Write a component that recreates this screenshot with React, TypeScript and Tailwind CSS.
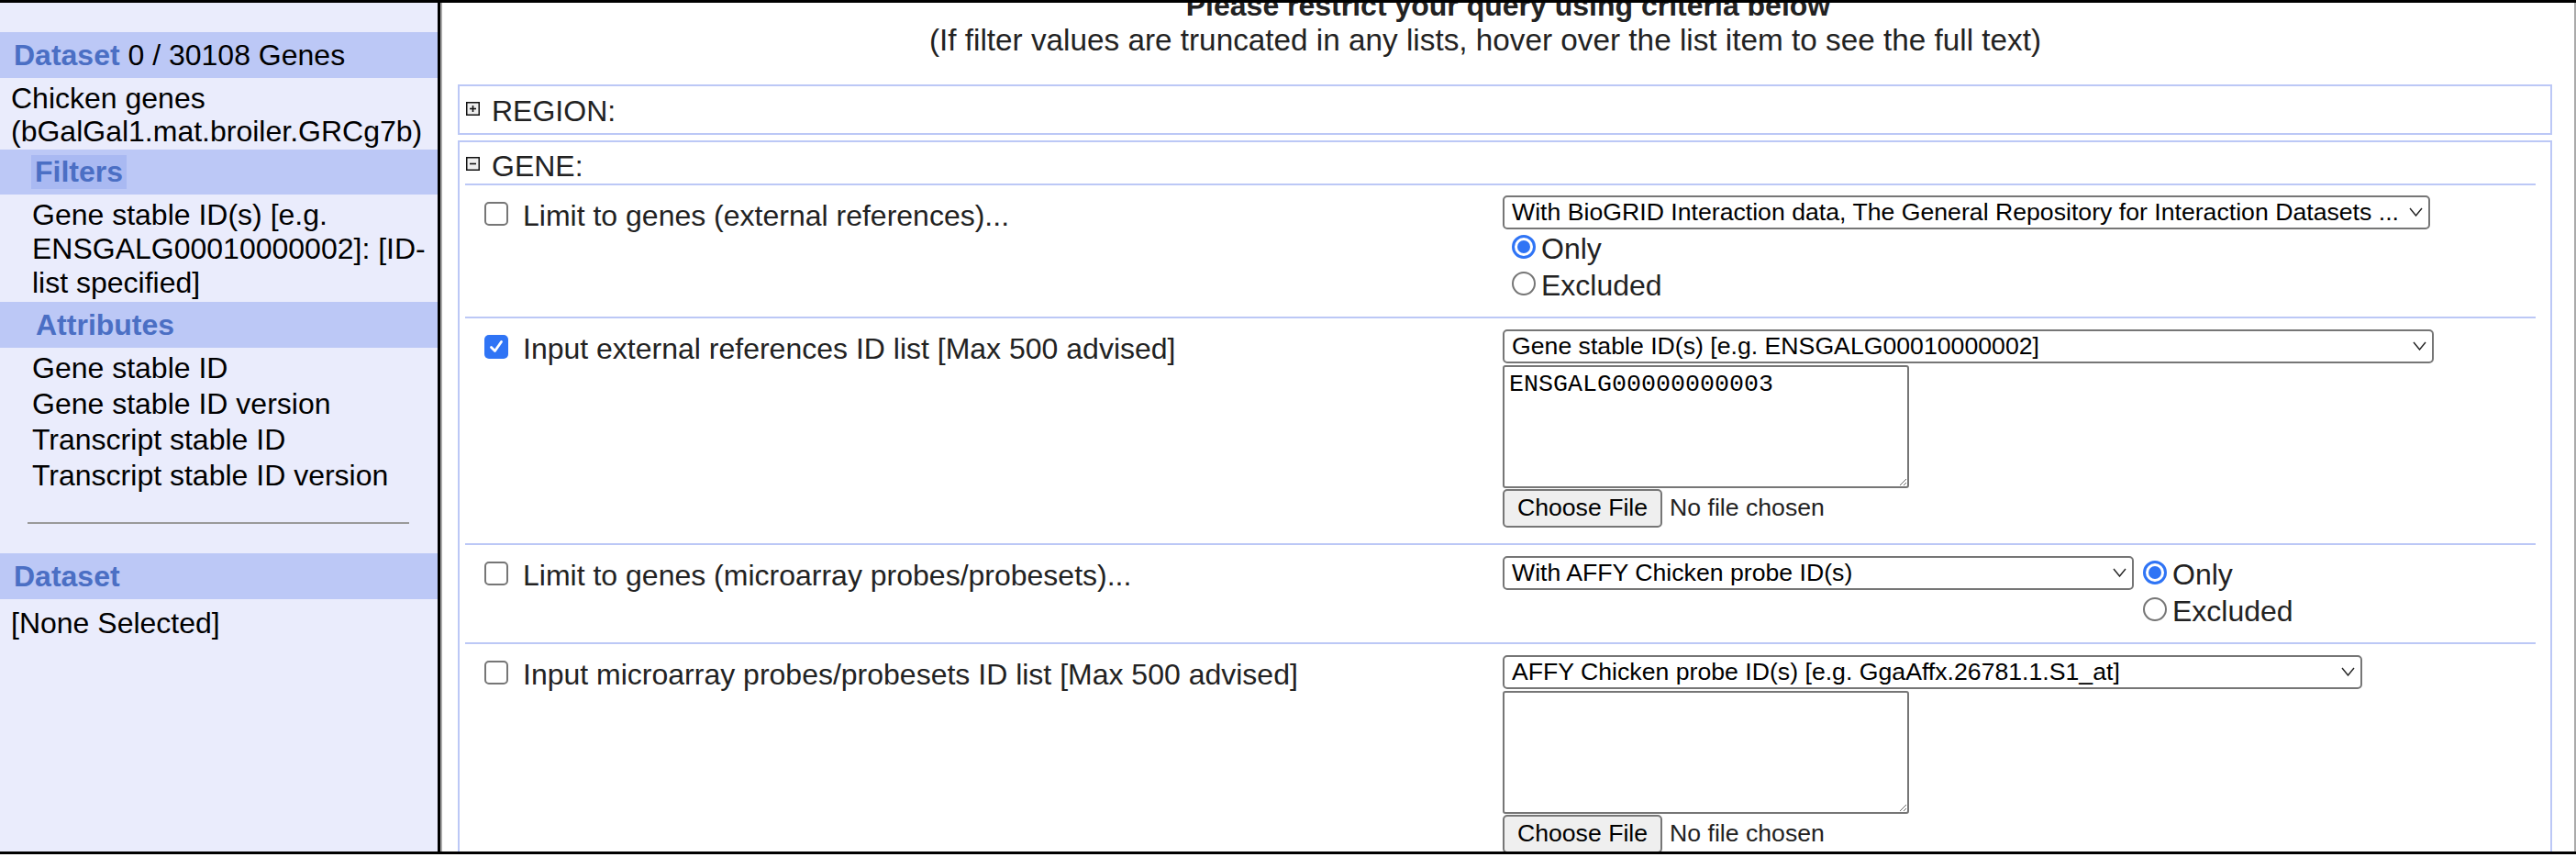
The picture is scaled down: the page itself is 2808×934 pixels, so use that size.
import React from "react";

const BLUE = "bg-[#2f74f5]";

function Checkbox({ checked = false }: { checked?: boolean }) {
  if (checked) {
    return (
      <span className={`mt-[3px] w-[26px] h-[26px] shrink-0 rounded-[5px] ${BLUE} flex items-center justify-center`}>
        <svg width="18" height="18" viewBox="0 0 18 18">
          <path d="M3.5 9.5 L7.5 13.5 L14.5 3.5" fill="none" stroke="white" strokeWidth="2.8" strokeLinecap="round" strokeLinejoin="round" />
        </svg>
      </span>
    );
  }
  return <span className="mt-[3px] w-[26px] h-[26px] shrink-0 rounded-[5px] border-2 border-[#767676] bg-white" />;
}

function Radio({ checked = false }: { checked?: boolean }) {
  if (checked) {
    return (
      <span className="mt-[6px] ml-[10px] w-[26px] h-[26px] shrink-0 rounded-full border-[3px] border-[#2f74f5] bg-white flex items-center justify-center">
        <span className={`w-[14px] h-[14px] rounded-full ${BLUE}`} />
      </span>
    );
  }
  return <span className="mt-[6px] ml-[10px] w-[26px] h-[26px] shrink-0 rounded-full border-2 border-[#767676] bg-white" />;
}

function OnlyExcluded() {
  return (
    <div>
      <div className="h-[40px] flex items-start">
        <Radio checked />
        <span className="mt-[3px] ml-[6px]">Only</span>
      </div>
      <div className="h-[40px] flex items-start">
        <Radio />
        <span className="mt-[3px] ml-[6px]">Excluded</span>
      </div>
    </div>
  );
}

function Select({ text, className = "" }: { text: string; className?: string }) {
  return (
    <div
      className={`h-[37px] shrink-0 border-2 border-[#767676] rounded-[5px] bg-white flex items-center justify-between pl-[8px] pr-[6px] text-[26.67px] text-black ${className}`}
    >
      <span className="whitespace-nowrap overflow-hidden">{text}</span>
      <svg width="15" height="10" viewBox="0 0 15 10" className="shrink-0">
        <path d="M1 1 L7.5 9 L14 1" fill="none" stroke="#222" strokeWidth="1.4" />
      </svg>
    </div>
  );
}

function IdList({ select, selectClass, value }: { select: string; selectClass: string; value: string }) {
  return (
    <div className="flex flex-col items-start">
      <Select text={select} className={selectClass} />
      <textarea
        readOnly
        defaultValue={value}
        className="block mt-[2px] w-[443px] h-[134px] border-2 border-[#767676] rounded-[3px] bg-white px-[5px] py-[4px] text-[26.67px] leading-[1.15] text-black font-['Liberation_Mono',monospace] outline-none"
      />
      <div className="mt-[1px] flex items-center text-[26.67px]">
        <button className="h-[42px] w-[174px] border-2 border-[#767676] rounded-[5px] bg-[#efefef] text-black">Choose File</button>
        <span className="ml-[8px] text-[#222]">No file chosen</span>
      </div>
    </div>
  );
}

function Row({ label, checked = false, children }: { label: string; checked?: boolean; children: React.ReactNode }) {
  return (
    <div className="flex border-t-2 border-[#bcc8f6]">
      <div className="w-[1131px] shrink-0 flex items-start pl-[21px] pt-[15px]">
        <Checkbox checked={checked} />
        <span className="ml-[16px]">{label}</span>
      </div>
      {children}
    </div>
  );
}

function Toggle({ open }: { open: boolean }) {
  return (
    <svg width="15" height="15" viewBox="0 0 15 15" className="mb-[6px] shrink-0">
      <rect x="0.75" y="0.75" width="13.5" height="13.5" fill="#eeeeee" stroke="#111" strokeWidth="1.5" />
      <line x1="4" y1="7.5" x2="11" y2="7.5" stroke="#111" strokeWidth="1.6" />
      {!open && <line x1="7.5" y1="4" x2="7.5" y2="11" stroke="#111" strokeWidth="1.6" />}
    </svg>
  );
}

export default function App() {
  return (
    <div className="w-[2808px] h-[934px] bg-white overflow-hidden font-['Liberation_Sans',Arial,sans-serif] text-[32px] leading-[1.15] text-black">
      <div className="flex h-[931px] border-t-[3px] border-b-[3px] border-black">
        {/* side summary */}
        <aside className="w-[477px] shrink-0 bg-[#eaecfc] pt-[32px]">
          <div className="h-[50px] flex items-center pl-[15px] bg-[#bcc8f6]">
            <span>
              <span className="font-bold text-[#4b6fc4]">Dataset</span> 0 / 30108 Genes
            </span>
          </div>
          <div className="pt-[4px] pb-[2px] pl-[12px] pr-[8px] leading-[36px]">Chicken genes (bGalGal1.mat.broiler.GRCg7b)</div>
          <div className="h-[49px] flex items-center bg-[#bcc8f6]">
            <span className="ml-[34px] h-[37px] px-[4px] flex items-center bg-[#a9b9f2] font-bold text-[#4b6fc4]">Filters</span>
          </div>
          <div className="pt-[4px] pb-[3px] pl-[35px] pr-[8px]">Gene stable ID(s) [e.g. ENSGALG00010000002]: [ID-list specified]</div>
          <div className="h-[50px] flex items-center pl-[39px] bg-[#bcc8f6] font-bold text-[#4b6fc4]">Attributes</div>
          <div className="pt-[3px] pl-[35px] leading-[39px]">
            <div>Gene stable ID</div>
            <div>Gene stable ID version</div>
            <div>Transcript stable ID</div>
            <div>Transcript stable ID version</div>
          </div>
          <div className="mt-[31px] ml-[30px] w-[416px] h-[2px] bg-[#9a9a9a]" />
          <div className="mt-[32px] h-[50px] flex items-center pl-[15px] bg-[#bcc8f6] font-bold text-[#4b6fc4]">Dataset</div>
          <div className="pt-[8px] pl-[12px]">[None Selected]</div>
        </aside>

        {/* filter panel */}
        <main className="flex-1 min-w-0 border-l-[3px] border-black">
          <div className="h-full border-l-2 border-r-2 border-l-[#a9a9a9] border-r-[#ababab] overflow-hidden text-[#222]">
            <h1 className="mt-[-15px] text-center font-bold">Please restrict your query using criteria below</h1>
            <p className="pr-[50px] text-center text-[33.3px]">
              (If filter values are truncated in any lists, hover over the list item to see the full text)
            </p>

            <div className="mt-[29px] ml-[17px] mr-[24px] border-2 border-[#bcc8f6] flex items-center pl-[7px] pt-[9px] pb-[5px]">
              <Toggle open={false} />
              <span className="ml-[13px]">REGION:</span>
            </div>

            <div className="mt-[6px] ml-[17px] mr-[24px] border-2 border-[#bcc8f6] h-[900px]">
              <div className="ml-[6px] mr-[16px]">
                <div className="flex items-center pl-[1px] pt-[8px]">
                  <Toggle open />
                  <span className="ml-[13px]">GENE:</span>
                </div>

                <Row label="Limit to genes (external references)...">
                  <div className="pt-[11px] pb-[15px]">
                    <Select
                      className="w-[1011px]"
                      text="With BioGRID Interaction data, The General Repository for Interaction Datasets ..."
                    />
                    <OnlyExcluded />
                  </div>
                </Row>

                <Row label="Input external references ID list [Max 500 advised]" checked>
                  <div className="pt-[12px] pb-[17px]">
                    <IdList
                      select="Gene stable ID(s) [e.g. ENSGALG00010000002]"
                      selectClass="w-[1015px]"
                      value="ENSGALG00000000003"
                    />
                  </div>
                </Row>

                <Row label="Limit to genes (microarray probes/probesets)...">
                  <div className="pt-[11px] pb-[15px] flex items-start">
                    <Select className="mt-[1px] w-[688px]" text="With AFFY Chicken probe ID(s)" />
                    <OnlyExcluded />
                  </div>
                </Row>

                <Row label="Input microarray probes/probesets ID list [Max 500 advised]">
                  <div className="pt-[12px] pb-[17px]">
                    <IdList
                      select="AFFY Chicken probe ID(s) [e.g. GgaAffx.26781.1.S1_at]"
                      selectClass="w-[937px]"
                      value=""
                    />
                  </div>
                </Row>
              </div>
            </div>
          </div>
        </main>
      </div>
    </div>
  );
}
